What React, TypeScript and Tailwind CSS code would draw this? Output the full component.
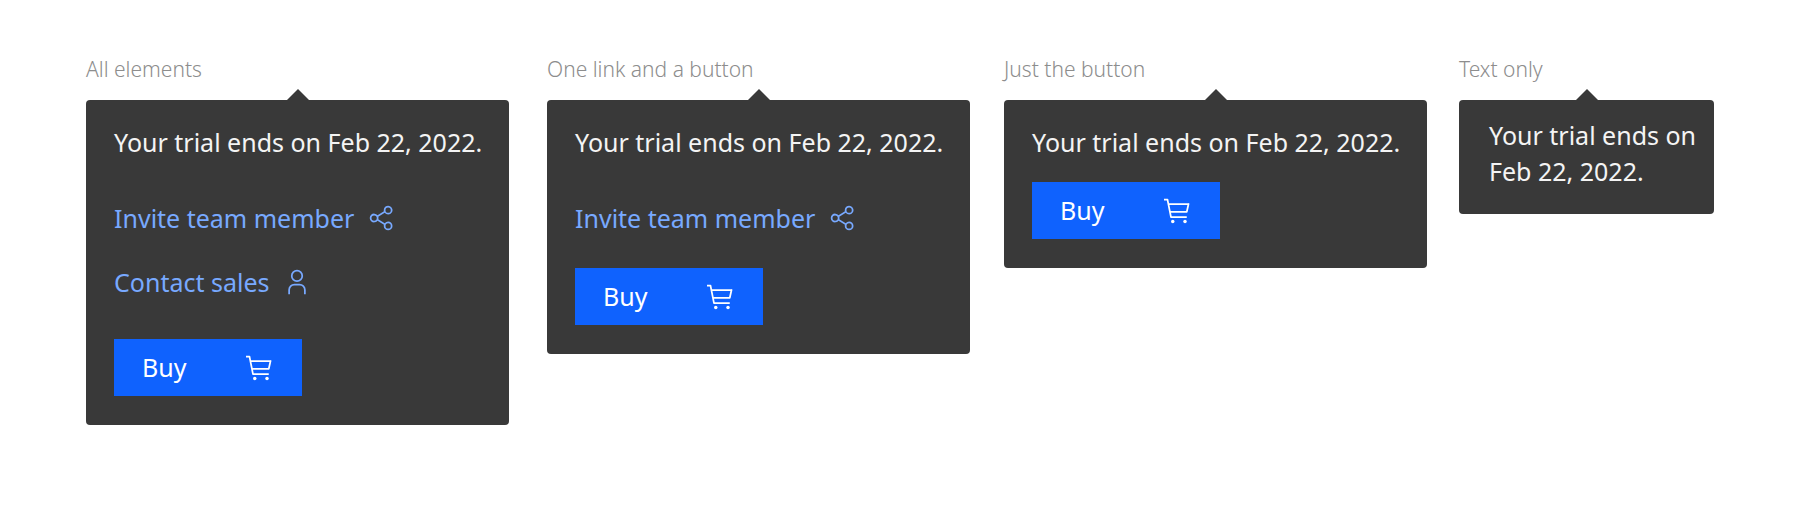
import type { ReactNode } from "react";

function ShareIcon() {
  return (
    <svg viewBox="0 0 32 32" className="size-7 shrink-0 fill-current" aria-hidden="true">
      <path d="M23,20a5,5,0,0,0-3.89,1.89L11.8,17.32a4.46,4.46,0,0,0,0-2.64l7.31-4.57A5,5,0,1,0,18,7a4.79,4.79,0,0,0,.2,1.32l-7.31,4.57a5,5,0,1,0,0,6.22l7.31,4.57A4.79,4.79,0,0,0,18,25a5,5,0,1,0,5-5ZM23,4a3,3,0,1,1-3,3A3,3,0,0,1,23,4ZM7,19a3,3,0,1,1,3-3A3,3,0,0,1,7,19Zm16,9a3,3,0,1,1,3-3A3,3,0,0,1,23,28Z" />
    </svg>
  );
}

function UserIcon() {
  return (
    <svg viewBox="0 0 32 32" className="size-7 shrink-0 fill-current" aria-hidden="true">
      <path d="M16,4a5,5,0,1,1-5,5,5,5,0,0,1,5-5m0-2a7,7,0,1,0,7,7A7,7,0,0,0,16,2Z" />
      <path d="M26,30H24V25a5,5,0,0,0-5-5H13a5,5,0,0,0-5,5v5H6V25a7,7,0,0,1,7-7h6a7,7,0,0,1,7,7Z" />
    </svg>
  );
}

function CartIcon() {
  return (
    <svg viewBox="0 0 32 32" className="size-7 shrink-0 fill-current" aria-hidden="true">
      <circle cx="10" cy="28" r="2" />
      <circle cx="24" cy="28" r="2" />
      <path d="M28,7H5.82L5,2.8A1,1,0,0,0,4,2H0V4H3.18L7,23.2A1,1,0,0,0,8,24H26V22H8.82L8,18H26a1,1,0,0,0,1-.78l2-9A1,1,0,0,0,28,7ZM25.2,16H7.62L6.22,9H26.75Z" />
    </svg>
  );
}

function Example({ label, className = "", children }: { label: string; className?: string; children: ReactNode }) {
  return (
    <section className={className}>
      <h2 className="text-[21px] leading-8 font-light text-[#8d8d8d]">{label}</h2>
      <svg viewBox="0 0 22 11" className="mx-auto mt-1 h-[11px] w-[22px] fill-[#393939]" aria-hidden="true">
        <path d="M11 0 22 11H0Z" />
      </svg>
      {children}
    </section>
  );
}

function Panel({ children }: { children: ReactNode }) {
  return <div className="flex flex-col items-start rounded bg-[#393939] px-7 pt-6 pb-[29px]">{children}</div>;
}

function TrialText() {
  return <p className="text-[25px] leading-9 text-[#f4f4f4] xl:whitespace-nowrap">Your trial ends on Feb 22, 2022.</p>;
}

function ActionLink({ icon, className, children }: { icon: ReactNode; className: string; children: ReactNode }) {
  return (
    <a href="#" className={`flex items-center gap-3.5 text-[25px] leading-9 text-[#78a9ff] ${className}`}>
      {children}
      {icon}
    </a>
  );
}

function BuyButton({ className }: { className: string }) {
  return (
    <button
      type="button"
      className={`flex h-[57px] w-[188px] items-center justify-between bg-[#0f62fe] px-7 text-[25px] text-white ${className}`}
    >
      Buy
      <CartIcon />
    </button>
  );
}

export default function App() {
  return (
    <main className="grid grid-cols-1 items-start gap-8 bg-white px-[86px] pt-[53px] pb-[86px] font-['Noto_Sans',sans-serif] md:grid-cols-2 xl:grid-cols-[minmax(0,429fr)_minmax(0,425fr)_minmax(0,423fr)_minmax(0,255fr)]">
      <Example label="All elements" className="xl:pr-[6px]">
        <Panel>
          <TrialText />
          <ActionLink className="mt-10" icon={<ShareIcon />}>
            Invite team member
          </ActionLink>
          <ActionLink className="mt-7" icon={<UserIcon />}>
            Contact sales
          </ActionLink>
          <BuyButton className="mt-[39px]" />
        </Panel>
      </Example>

      <Example label="One link and a button" className="xl:pr-[2px]">
        <Panel>
          <TrialText />
          <ActionLink className="mt-10" icon={<ShareIcon />}>
            Invite team member
          </ActionLink>
          <BuyButton className="mt-8" />
        </Panel>
      </Example>

      <Example label="Just the button">
        <Panel>
          <TrialText />
          <BuyButton className="mt-[22px]" />
        </Panel>
      </Example>

      <Example label="Text only">
        <div className="rounded bg-[#393939] pt-[17px] pr-4 pb-[25px] pl-[30px] text-[25px] leading-9 text-[#f4f4f4]">
          <p>
            <span className="xl:whitespace-nowrap">Your trial ends on</span> <br />
            Feb 22, 2022.
          </p>
        </div>
      </Example>
    </main>
  );
}
